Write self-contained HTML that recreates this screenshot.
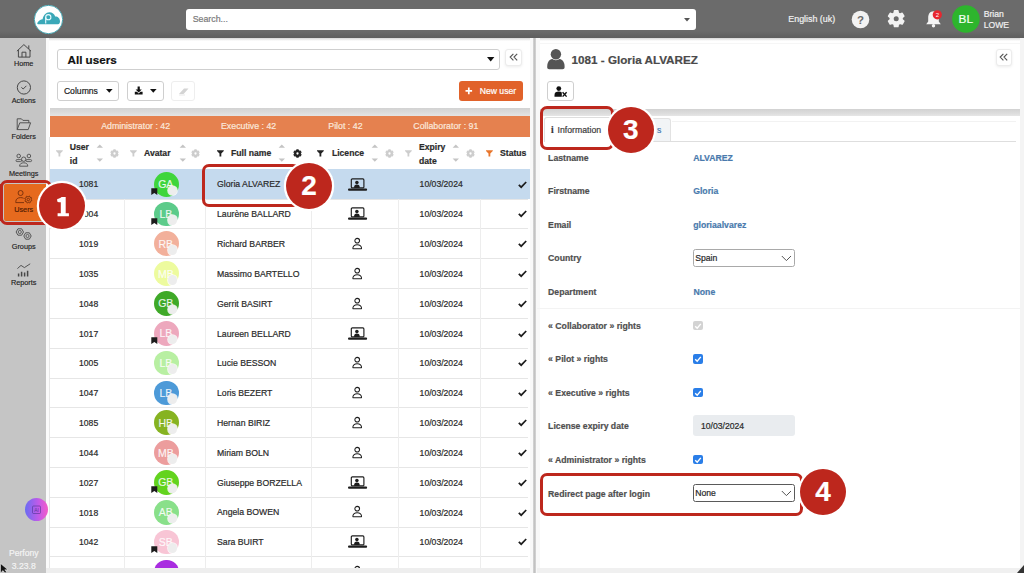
<!DOCTYPE html>
<html><head><meta charset="utf-8"><title>Users</title>
<style>
html,body{margin:0;padding:0;}
body{width:1024px;height:573px;position:relative;overflow:hidden;background:#fff;font-family:"Liberation Sans",sans-serif;}
.t{position:absolute;white-space:nowrap;line-height:1;-webkit-text-stroke:0.2px currentColor;}
.b{position:absolute;display:block;}
svg.b{overflow:visible;}
</style></head><body>
<div class="b" style="left:0.00px;top:0.00px;width:1024.00px;height:37.60px;background:#6b6b6b"></div>
<div class="b" style="left:0.00px;top:31.00px;width:1024.00px;height:6.60px;background:linear-gradient(#6b6b6b,#5f5f5f)"></div>
<div class="b" style="left:46.00px;top:37.60px;width:974.00px;height:3.00px;background:linear-gradient(#d8d8d8,#fff)"></div>
<div class="b" style="left:537.00px;top:43.00px;width:483.00px;height:0.80px;background:#f6f6f6"></div>
<svg class="b" style="left:33.00px;top:3.50px" width="31" height="31" viewBox="0 0 31 31"><circle cx="15.5" cy="15.5" r="14.2" fill="#fff" stroke="#3aa3b0" stroke-width="0.9"/><path d="M5 20.2 C4.2 20.2 4 19.4 4.6 18.6 C5.8 16.6 7.6 15.4 9.6 15.2 C10.4 11.2 13 8.2 16.4 8.2 C19.2 8.2 21.4 10 22.2 12.6 C24.8 12.4 27 14.6 27 17.4 C27 19 26.2 20.2 25 20.2 Z" fill="#3aa8b8"/><circle cx="15.3" cy="13.2" r="2.6" fill="none" stroke="#e9fbff" stroke-width="1.1"/><path d="M12.7 13.2 V19.6" stroke="#e9fbff" stroke-width="1.1"/></svg>
<div class="b" style="left:185.60px;top:8.60px;width:510.70px;height:21.10px;background:#fff;border-radius:3px"></div>
<div class="t" style="left:192.70px;top:14.85px;font-size:8.8px;color:#7a7a7a;font-weight:400;">Search...</div>
<svg class="b" style="left:684.00px;top:18.00px" width="6" height="4" viewBox="0 0 6 4"><path d="M0 0 L6 0 L3 3.5 Z" fill="#555"/></svg>
<div class="t" style="left:788.30px;top:15.07px;font-size:8.9px;color:#f0f0f0;font-weight:400;">English (uk)</div>
<svg class="b" style="left:851.00px;top:10.00px" width="19" height="19" viewBox="0 0 19 19"><circle cx="9.5" cy="9.5" r="8.8" fill="#f2f2f2"/><text x="9.5" y="13.6" text-anchor="middle" font-family="Liberation Sans" font-weight="700" font-size="11.5" fill="#6b6b6b">?</text></svg>
<svg class="b" style="left:886.00px;top:9.00px" width="20" height="20" viewBox="0 0 20 20"><path d="M16.02 10.68 L17.81 12.17 L16.15 15.05 L13.96 14.25 L12.26 15.23 L11.86 17.53 L8.54 17.53 L8.14 15.23 L6.44 14.25 L4.25 15.05 L2.59 12.17 L4.38 10.68 L4.38 8.72 L2.59 7.23 L4.25 4.35 L6.44 5.15 L8.14 4.17 L8.54 1.87 L11.86 1.87 L12.26 4.17 L13.96 5.15 L16.15 4.35 L17.81 7.23 L16.02 8.72 Z" fill="#f2f2f2" stroke="#f2f2f2" stroke-width="1.6" stroke-linejoin="round"/><circle cx="10.2" cy="9.7" r="2.5" fill="#6b6b6b"/></svg>
<svg class="b" style="left:924.00px;top:9.00px" width="22" height="20" viewBox="0 0 22 20"><path d="M9.5 2.2 C6 2.2 4.2 5 4.2 8.6 L4.2 12.4 L2.2 15.2 L16.8 15.2 L14.8 12.4 L14.8 8.6 C14.8 5 13 2.2 9.5 2.2 Z" fill="#f4f4f4"/><circle cx="9.5" cy="16.8" r="1.7" fill="#f4f4f4"/><circle cx="13.3" cy="5.8" r="4.6" fill="#e8262f"/><text x="13.3" y="7.9" text-anchor="middle" font-family="Liberation Sans" font-size="6" fill="#fff">2</text></svg>
<svg class="b" style="left:952.00px;top:5.00px" width="28" height="28" viewBox="0 0 28 28"><circle cx="13.9" cy="14" r="13.8" fill="#2db52d"/></svg>
<div class="t" style="left:950.80px;width:30px;text-align:center;top:13.61px;font-size:11.8px;color:#f4fff4;font-weight:400;">BL</div>
<div class="t" style="left:983.70px;top:9.88px;font-size:8.65px;color:#f0f0f0;font-weight:400;">Brian</div>
<div class="t" style="left:983.70px;top:20.58px;font-size:8.65px;color:#f0f0f0;font-weight:400;">LOWE</div>
<div class="b" style="left:0.00px;top:37.60px;width:46.00px;height:535.40px;background:#c5c5c5"></div>
<div class="b" style="left:46.00px;top:37.60px;width:2.50px;height:535.40px;background:#fbfbfb"></div>
<svg class="b" style="left:16.00px;top:43.00px" width="16" height="16" viewBox="0 0 16 16"><path d="M0.9 8.2 L7.9 1.6 L15 8.2 M2.4 6.9 V14.1 H14 V6.9 M6 14.1 V9.2 H9.9 V14.1 M12.8 2.4 V6" fill="none" stroke="#474747" stroke-width="1"/></svg>
<div class="t" style="left:0.70px;width:46px;text-align:center;top:59.82px;font-size:7.3px;color:#222;font-weight:400;-webkit-text-stroke:0.15px #222">Home</div>
<svg class="b" style="left:16.00px;top:79.50px" width="16" height="16" viewBox="0 0 16 16"><circle cx="7.9" cy="7.5" r="6.6" fill="none" stroke="#474747" stroke-width="1"/><path d="M5.4 7.4 L7.2 9 L10.4 5.8" fill="none" stroke="#474747" stroke-width="1"/></svg>
<div class="t" style="left:0.70px;width:46px;text-align:center;top:97.32px;font-size:7.3px;color:#222;font-weight:400;-webkit-text-stroke:0.15px #222">Actions</div>
<svg class="b" style="left:15.50px;top:116.50px" width="18" height="16" viewBox="0 0 18 16"><path d="M1.2 12.6 V1.8 H5.4 L6.9 3.4 H12.8 V5.8 M1.2 12.6 L3.8 5.8 H14.6 L12.2 12.6 Z" fill="none" stroke="#474747" stroke-width="0.9" stroke-linejoin="round"/></svg>
<div class="t" style="left:0.70px;width:46px;text-align:center;top:133.32px;font-size:7.3px;color:#222;font-weight:400;-webkit-text-stroke:0.15px #222">Folders</div>
<svg class="b" style="left:15.00px;top:153.00px" width="18" height="15" viewBox="0 0 18 15"><circle cx="3.7" cy="3" r="1.8" fill="none" stroke="#474747" stroke-width="0.85"/><circle cx="13.9" cy="3" r="1.8" fill="none" stroke="#474747" stroke-width="0.85"/><circle cx="8.7" cy="6.2" r="2.2" fill="none" stroke="#474747" stroke-width="0.85"/><rect x="1.0" y="6.6" width="5.6" height="2.0" rx="1" fill="none" stroke="#474747" stroke-width="0.8"/><rect x="11.0" y="6.6" width="5.6" height="2.0" rx="1" fill="none" stroke="#474747" stroke-width="0.8"/><path d="M4.6 13.2 C4.6 10.8 6.4 9.8 8.7 9.8 C11 9.8 12.8 10.8 12.8 13.2 Z" fill="none" stroke="#474747" stroke-width="0.85" stroke-linejoin="round"/></svg>
<div class="t" style="left:0.70px;width:46px;text-align:center;top:170.22px;font-size:7.3px;color:#222;font-weight:400;-webkit-text-stroke:0.15px #222">Meetings</div>
<div class="b" style="left:3.60px;top:183.50px;width:42.40px;height:37.10px;background:#e66a1e;border-radius:2px 0 0 2px"></div>
<svg class="b" style="left:14.00px;top:188.00px" width="20" height="16" viewBox="0 0 20 16"><circle cx="6.6" cy="5.0" r="2.5" fill="none" stroke="#6e2a0a" stroke-width="0.85"/><path d="M1.8 14.6 V13.6 C1.8 11 3.8 9.6 6.6 9.6 C7.8 9.6 8.8 9.8 9.6 10.3 M1.8 14.6 H10" fill="none" stroke="#6e2a0a" stroke-width="0.85"/><path d="M17.11 11.50 L17.83 12.20 L17.63 12.88 L16.63 13.06 L16.29 13.49 L16.30 14.49 L15.68 14.83 L14.85 14.25 L14.30 14.31 L13.60 15.03 L12.92 14.83 L12.74 13.83 L12.31 13.49 L11.31 13.50 L10.97 12.88 L11.55 12.05 L11.49 11.50 L10.77 10.80 L10.97 10.12 L11.97 9.94 L12.31 9.51 L12.30 8.51 L12.92 8.17 L13.75 8.75 L14.30 8.69 L15.00 7.97 L15.68 8.17 L15.86 9.17 L16.29 9.51 L17.29 9.50 L17.63 10.12 L17.05 10.95 Z" fill="none" stroke="#6e2a0a" stroke-width="0.85" stroke-linejoin="round"/><circle cx="14.3" cy="11.5" r="1.26" fill="none" stroke="#6e2a0a" stroke-width="0.8"/></svg>
<div class="t" style="left:0.70px;width:46px;text-align:center;top:206.12px;font-size:7.3px;color:#4e1a02;font-weight:400;-webkit-text-stroke:0.15px #4e1a02">Users</div>
<svg class="b" style="left:14.00px;top:226.00px" width="20" height="15" viewBox="0 0 20 15"><polygon points="9.50,6.00 7.65,9.20 3.95,9.20 2.10,6.00 3.95,2.80 7.65,2.80" fill="none" stroke="#474747" stroke-width="0.9" stroke-linejoin="round"/><circle cx="5.8" cy="6.0" r="1.55" fill="none" stroke="#474747" stroke-width="0.8"/><polygon points="17.20,10.00 15.35,13.20 11.65,13.20 9.80,10.00 11.65,6.80 15.35,6.80" fill="none" stroke="#474747" stroke-width="0.9" stroke-linejoin="round"/><circle cx="13.5" cy="10.0" r="1.55" fill="none" stroke="#474747" stroke-width="0.8"/></svg>
<div class="t" style="left:0.70px;width:46px;text-align:center;top:242.72px;font-size:7.3px;color:#222;font-weight:400;-webkit-text-stroke:0.15px #222">Groups</div>
<svg class="b" style="left:16.00px;top:262.50px" width="16" height="15" viewBox="0 0 16 15"><path d="M1.4 5.6 L5 2.4 L8.4 4.6 L14.2 0.8" fill="none" stroke="#474747" stroke-width="0.9"/><path d="M2.6 13.6 V10.6 M5.6 13.6 V8.8 M8.6 13.6 V9.6 M11.6 13.6 V7.8" fill="none" stroke="#474747" stroke-width="1.5"/></svg>
<div class="t" style="left:0.70px;width:46px;text-align:center;top:279.32px;font-size:7.3px;color:#222;font-weight:400;-webkit-text-stroke:0.15px #222">Reports</div>
<div class="b" style="left:24.6px;top:498px;width:23.2px;height:23.2px;border-radius:50%;background:linear-gradient(90deg,#6a6cf2,#c35ae8 60%,#f45cc8)"></div>
<svg class="b" style="left:30.00px;top:504.00px" width="13" height="12" viewBox="0 0 13 12"><rect x="2.5" y="2" width="8" height="7.5" rx="1" fill="none" stroke="#4a2f8a" stroke-width="0.8" opacity="0.7"/><text x="6.5" y="8.2" text-anchor="middle" font-family="Liberation Sans" font-size="5" fill="#4a2f8a" opacity="0.8">AI</text></svg>
<div class="t" style="left:0.80px;width:46px;text-align:center;top:549.38px;font-size:8.65px;color:#f4f4f4;font-weight:400;">Perfony</div>
<div class="t" style="left:0.80px;width:46px;text-align:center;top:562.08px;font-size:8.65px;color:#f4f4f4;font-weight:400;">3.23.8</div>
<svg class="b" style="left:0.00px;top:563.00px" width="9" height="10" viewBox="0 0 9 10"><path d="M0.5 0.5 L0.5 10 L3 7.6 L5 10 L6.6 9 L4.8 6.8 L8 6.8 Z" fill="#111" stroke="#fff" stroke-width="0.5"/></svg>
<div class="b" style="left:57.00px;top:48.50px;width:443.40px;height:21.10px;border:1px solid #cfcfcf;border-radius:3px;box-sizing:border-box;background:#fff"></div>
<div class="t" style="left:67.50px;top:53.84px;font-size:11.65px;color:#111;font-weight:700;">All users</div>
<svg class="b" style="left:486.50px;top:56.50px" width="8" height="5" viewBox="0 0 8 5"><path d="M0 0 H7.4 L3.7 4.4 Z" fill="#111"/></svg>
<div class="b" style="left:505.00px;top:49.20px;width:16.80px;height:17.00px;background:#fff;border-radius:3px;border:1px solid #ececec;box-sizing:border-box;box-shadow:0 1px 3px rgba(0,0,0,0.08)"></div>
<svg class="b" style="left:508.70px;top:53.10px" width="10" height="9" viewBox="0 0 10 9"><path d="M4.4 0.8 L1.2 4.1 L4.4 7.4 M8.2 0.8 L5.0 4.1 L8.2 7.4" fill="none" stroke="#555" stroke-width="1.15"/></svg>
<div class="b" style="left:57.00px;top:81.30px;width:62.30px;height:19.30px;border:1px solid #cfcfcf;border-radius:3px;box-sizing:border-box;background:#fff"></div>
<div class="t" style="left:63.90px;top:86.98px;font-size:8.65px;color:#222;font-weight:400;">Columns</div>
<svg class="b" style="left:105.80px;top:89.00px" width="7" height="4.5" viewBox="0 0 7 4.5"><path d="M0 0 H6.6 L3.3 3.8 Z" fill="#111"/></svg>
<div class="b" style="left:127.00px;top:81.30px;width:37.00px;height:19.30px;border:1px solid #cfcfcf;border-radius:3px;box-sizing:border-box;background:#fff"></div>
<svg class="b" style="left:133.50px;top:86.00px" width="10" height="9" viewBox="0 0 10 9"><path d="M3.6 0.5 H5.8 V3.6 H7.8 L4.7 6.6 L1.6 3.6 H3.6 Z" fill="#111"/><path d="M0.8 5.8 H3 L4.7 7.4 L6.4 5.8 H8.6 V8.6 H0.8 Z" fill="#111"/></svg>
<svg class="b" style="left:150.00px;top:89.00px" width="7" height="4.5" viewBox="0 0 7 4.5"><path d="M0 0 H6.6 L3.3 3.8 Z" fill="#111"/></svg>
<div class="b" style="left:171.00px;top:81.30px;width:24.40px;height:19.30px;border:1px solid #eeeeee;border-radius:3px;box-sizing:border-box;background:#fff"></div>
<svg class="b" style="left:177.50px;top:86.50px" width="12" height="9" viewBox="0 0 12 9"><path d="M1 7 L6 1.5 H10.5 L6.5 6 Z M1 7 H5.5 L6.5 6" fill="#d4d4d4"/><path d="M1 8 H7" stroke="#d8d8d8" stroke-width="0.6"/></svg>
<div class="b" style="left:459.00px;top:81.30px;width:63.80px;height:19.50px;background:#e1622a;border-radius:3px"></div>
<svg class="b" style="left:464.50px;top:87.00px" width="8" height="8" viewBox="0 0 8 8"><path d="M3.8 0.5 V7.3 M0.5 3.9 H7.1" stroke="#fff" stroke-width="1.7"/></svg>
<div class="t" style="left:479.70px;top:86.68px;font-size:8.65px;color:#fff;font-weight:400;">New user</div>
<div class="b" style="left:49.70px;top:108.40px;width:480.30px;height:7.30px;background:linear-gradient(#d2d2d2,#dcdcdc 60%,#e4e4e4)"></div>
<div class="b" style="left:49.70px;top:115.70px;width:480.30px;height:21.70px;background:#e5814f"></div>
<div class="t" style="left:101.20px;top:122.35px;font-size:8.8px;color:#fbe8dc;font-weight:400;">Administrator : 42</div>
<div class="t" style="left:221.00px;top:122.35px;font-size:8.8px;color:#fbe8dc;font-weight:400;">Executive : 42</div>
<div class="t" style="left:328.30px;top:122.35px;font-size:8.8px;color:#fbe8dc;font-weight:400;">Pilot : 42</div>
<div class="t" style="left:413.30px;top:122.35px;font-size:8.8px;color:#fbe8dc;font-weight:400;">Collaborator : 91</div>
<svg class="b" style="left:55.50px;top:149.50px" width="7" height="7" viewBox="0 0 7 7"><path d="M0 0.2 H6.8 V1.0 L4.3 3.5 V6.6 H2.5 V3.5 L0 1.0 Z" fill="#cdcdcd"/></svg>
<div class="t" style="left:69.80px;top:142.68px;font-size:8.65px;color:#2b2b2b;font-weight:700;">User</div>
<div class="t" style="left:69.80px;top:156.58px;font-size:8.65px;color:#2b2b2b;font-weight:700;">id</div>
<svg class="b" style="left:96.00px;top:144.20px" width="8" height="18" viewBox="0 0 8 18"><path d="M0.6 3.8 L3.8 0.4 L7 3.8 Z M0.6 14.4 L3.8 17.8 L7 14.4 Z" fill="#c4c4c4"/></svg>
<svg class="b" style="left:110.00px;top:148.70px" width="9" height="9" viewBox="0 0 9 9"><path d="M7.36 4.98 L8.02 5.64 L7.25 6.98 L6.35 6.73 L5.51 7.22 L5.27 8.12 L3.73 8.12 L3.49 7.22 L2.65 6.73 L1.75 6.98 L0.98 5.64 L1.64 4.98 L1.64 4.02 L0.98 3.36 L1.75 2.02 L2.65 2.27 L3.49 1.78 L3.73 0.88 L5.27 0.88 L5.51 1.78 L6.35 2.27 L7.25 2.02 L8.02 3.36 L7.36 4.02 Z" fill="#cdcdcd" stroke="#cdcdcd" stroke-width="1.1" stroke-linejoin="round"/><circle cx="4.5" cy="4.5" r="1.15" fill="#fff"/></svg>
<svg class="b" style="left:129.50px;top:149.50px" width="7" height="7" viewBox="0 0 7 7"><path d="M0 0.2 H6.8 V1.0 L4.3 3.5 V6.6 H2.5 V3.5 L0 1.0 Z" fill="#cdcdcd"/></svg>
<div class="t" style="left:144.00px;top:149.18px;font-size:8.65px;color:#2b2b2b;font-weight:700;">Avatar</div>
<svg class="b" style="left:178.50px;top:144.20px" width="8" height="18" viewBox="0 0 8 18"><path d="M0.6 3.8 L3.8 0.4 L7 3.8 Z M0.6 14.4 L3.8 17.8 L7 14.4 Z" fill="#c4c4c4"/></svg>
<svg class="b" style="left:191.00px;top:148.70px" width="9" height="9" viewBox="0 0 9 9"><path d="M7.36 4.98 L8.02 5.64 L7.25 6.98 L6.35 6.73 L5.51 7.22 L5.27 8.12 L3.73 8.12 L3.49 7.22 L2.65 6.73 L1.75 6.98 L0.98 5.64 L1.64 4.98 L1.64 4.02 L0.98 3.36 L1.75 2.02 L2.65 2.27 L3.49 1.78 L3.73 0.88 L5.27 0.88 L5.51 1.78 L6.35 2.27 L7.25 2.02 L8.02 3.36 L7.36 4.02 Z" fill="#cdcdcd" stroke="#cdcdcd" stroke-width="1.1" stroke-linejoin="round"/><circle cx="4.5" cy="4.5" r="1.15" fill="#fff"/></svg>
<svg class="b" style="left:216.80px;top:149.50px" width="7" height="7" viewBox="0 0 7 7"><path d="M0 0.2 H6.8 V1.0 L4.3 3.5 V6.6 H2.5 V3.5 L0 1.0 Z" fill="#222"/></svg>
<div class="t" style="left:231.00px;top:149.08px;font-size:8.65px;color:#2b2b2b;font-weight:700;">Full name</div>
<svg class="b" style="left:278.40px;top:144.20px" width="8" height="18" viewBox="0 0 8 18"><path d="M0.6 3.8 L3.8 0.4 L7 3.8 Z M0.6 14.4 L3.8 17.8 L7 14.4 Z" fill="#c4c4c4"/></svg>
<svg class="b" style="left:292.70px;top:148.70px" width="9" height="9" viewBox="0 0 9 9"><path d="M7.36 4.98 L8.02 5.64 L7.25 6.98 L6.35 6.73 L5.51 7.22 L5.27 8.12 L3.73 8.12 L3.49 7.22 L2.65 6.73 L1.75 6.98 L0.98 5.64 L1.64 4.98 L1.64 4.02 L0.98 3.36 L1.75 2.02 L2.65 2.27 L3.49 1.78 L3.73 0.88 L5.27 0.88 L5.51 1.78 L6.35 2.27 L7.25 2.02 L8.02 3.36 L7.36 4.02 Z" fill="#222" stroke="#222" stroke-width="1.1" stroke-linejoin="round"/><circle cx="4.5" cy="4.5" r="1.15" fill="#fff"/></svg>
<svg class="b" style="left:317.00px;top:149.50px" width="7" height="7" viewBox="0 0 7 7"><path d="M0 0.2 H6.8 V1.0 L4.3 3.5 V6.6 H2.5 V3.5 L0 1.0 Z" fill="#222"/></svg>
<div class="t" style="left:331.90px;top:149.08px;font-size:8.65px;color:#2b2b2b;font-weight:700;">Licence</div>
<svg class="b" style="left:371.00px;top:144.20px" width="8" height="18" viewBox="0 0 8 18"><path d="M0.6 3.8 L3.8 0.4 L7 3.8 Z M0.6 14.4 L3.8 17.8 L7 14.4 Z" fill="#c4c4c4"/></svg>
<svg class="b" style="left:385.00px;top:148.70px" width="9" height="9" viewBox="0 0 9 9"><path d="M7.36 4.98 L8.02 5.64 L7.25 6.98 L6.35 6.73 L5.51 7.22 L5.27 8.12 L3.73 8.12 L3.49 7.22 L2.65 6.73 L1.75 6.98 L0.98 5.64 L1.64 4.98 L1.64 4.02 L0.98 3.36 L1.75 2.02 L2.65 2.27 L3.49 1.78 L3.73 0.88 L5.27 0.88 L5.51 1.78 L6.35 2.27 L7.25 2.02 L8.02 3.36 L7.36 4.02 Z" fill="#cdcdcd" stroke="#cdcdcd" stroke-width="1.1" stroke-linejoin="round"/><circle cx="4.5" cy="4.5" r="1.15" fill="#fff"/></svg>
<svg class="b" style="left:404.50px;top:149.50px" width="7" height="7" viewBox="0 0 7 7"><path d="M0 0.2 H6.8 V1.0 L4.3 3.5 V6.6 H2.5 V3.5 L0 1.0 Z" fill="#cdcdcd"/></svg>
<div class="t" style="left:419.00px;top:142.68px;font-size:8.65px;color:#2b2b2b;font-weight:700;">Expiry</div>
<div class="t" style="left:419.00px;top:156.58px;font-size:8.65px;color:#2b2b2b;font-weight:700;">date</div>
<svg class="b" style="left:452.00px;top:144.20px" width="8" height="18" viewBox="0 0 8 18"><path d="M0.6 3.8 L3.8 0.4 L7 3.8 Z M0.6 14.4 L3.8 17.8 L7 14.4 Z" fill="#c4c4c4"/></svg>
<svg class="b" style="left:466.30px;top:148.70px" width="9" height="9" viewBox="0 0 9 9"><path d="M7.36 4.98 L8.02 5.64 L7.25 6.98 L6.35 6.73 L5.51 7.22 L5.27 8.12 L3.73 8.12 L3.49 7.22 L2.65 6.73 L1.75 6.98 L0.98 5.64 L1.64 4.98 L1.64 4.02 L0.98 3.36 L1.75 2.02 L2.65 2.27 L3.49 1.78 L3.73 0.88 L5.27 0.88 L5.51 1.78 L6.35 2.27 L7.25 2.02 L8.02 3.36 L7.36 4.02 Z" fill="#cdcdcd" stroke="#cdcdcd" stroke-width="1.1" stroke-linejoin="round"/><circle cx="4.5" cy="4.5" r="1.15" fill="#fff"/></svg>
<svg class="b" style="left:485.80px;top:149.50px" width="7" height="7" viewBox="0 0 7 7"><path d="M0 0.2 H6.8 V1.0 L4.3 3.5 V6.6 H2.5 V3.5 L0 1.0 Z" fill="#e8762c"/></svg>
<div class="t" style="left:500.00px;top:149.08px;font-size:8.65px;color:#2b2b2b;font-weight:700;">Status</div>
<div class="b" style="left:50.00px;top:169.20px;width:480.00px;height:398.60px;background:#fff"></div>
<div class="b" style="left:50.00px;top:169.20px;width:480.00px;height:29.83px;background:#c5daee"></div>
<div class="b" style="left:50.00px;top:198.53px;width:478.00px;height:1.00px;background:#e6e6e6"></div>
<div class="b" style="left:50.00px;top:228.36px;width:478.00px;height:1.00px;background:#e6e6e6"></div>
<div class="b" style="left:50.00px;top:258.19px;width:478.00px;height:1.00px;background:#e6e6e6"></div>
<div class="b" style="left:50.00px;top:288.02px;width:478.00px;height:1.00px;background:#e6e6e6"></div>
<div class="b" style="left:50.00px;top:317.85px;width:478.00px;height:1.00px;background:#e6e6e6"></div>
<div class="b" style="left:50.00px;top:347.68px;width:478.00px;height:1.00px;background:#e6e6e6"></div>
<div class="b" style="left:50.00px;top:377.51px;width:478.00px;height:1.00px;background:#e6e6e6"></div>
<div class="b" style="left:50.00px;top:407.34px;width:478.00px;height:1.00px;background:#e6e6e6"></div>
<div class="b" style="left:50.00px;top:437.17px;width:478.00px;height:1.00px;background:#e6e6e6"></div>
<div class="b" style="left:50.00px;top:467.00px;width:478.00px;height:1.00px;background:#e6e6e6"></div>
<div class="b" style="left:50.00px;top:496.83px;width:478.00px;height:1.00px;background:#e6e6e6"></div>
<div class="b" style="left:50.00px;top:526.66px;width:478.00px;height:1.00px;background:#e6e6e6"></div>
<div class="b" style="left:50.00px;top:556.49px;width:478.00px;height:1.00px;background:#e6e6e6"></div>
<div class="b" style="left:124.30px;top:199.03px;width:1.00px;height:368.77px;background:#ededed"></div>
<div class="b" style="left:204.90px;top:199.03px;width:1.00px;height:368.77px;background:#ededed"></div>
<div class="b" style="left:311.00px;top:199.03px;width:1.00px;height:368.77px;background:#ededed"></div>
<div class="b" style="left:398.10px;top:199.03px;width:1.00px;height:368.77px;background:#ededed"></div>
<div class="b" style="left:479.90px;top:199.03px;width:1.00px;height:368.77px;background:#ededed"></div>
<div class="t" style="left:79.00px;top:180.49px;font-size:8.65px;color:#2a2a2a;font-weight:400;">1081</div>
<div class="b" style="left:153.90px;top:171.71px;width:24.8px;height:24.8px;border-radius:50%;background:#3fd53b"></div>
<div class="t" style="left:150.80px;width:30px;text-align:center;top:179.03px;font-size:10.5px;color:rgba(255,255,255,0.85);font-weight:400;">GA</div>
<div class="b" style="left:167.60px;top:185.51px;width:9.6px;height:9.6px;border-radius:50%;background:#ededed;box-shadow:0 0 0 0.8px rgba(255,255,255,0.8)"></div>
<svg class="b" style="left:151.40px;top:187.91px" width="7" height="7.5" viewBox="0 0 7 7.5"><path d="M0.3 0.2 H6.3 V7 L3.3 5 L0.3 7 Z" fill="#1c1c1c"/></svg>
<div class="t" style="left:217.00px;top:180.35px;font-size:8.7px;color:#2a2a2a;font-weight:400;">Gloria ALVAREZ</div>
<div class="t" style="left:419.60px;top:180.39px;font-size:8.65px;color:#2a2a2a;font-weight:400;">10/03/2024</div>
<svg class="b" style="left:518.00px;top:180.51px" width="9" height="7.5" viewBox="0 0 9 7.5"><path d="M0.8 3.8 L3.2 6.2 L8.2 1" fill="none" stroke="#1c1c1c" stroke-width="1.7"/></svg>
<svg class="b" style="left:347.90px;top:177.51px" width="20" height="13" viewBox="0 0 20 13"><rect x="3.3" y="0.9" width="12.6" height="9.0" rx="1" fill="none" stroke="#1e1e1e" stroke-width="1.15"/><circle cx="8.9" cy="4.5" r="1.75" fill="#1e1e1e"/><path d="M6.2 9.9 V8.6 C6.2 7.2 7.4 6.5 8.9 6.5 C10.4 6.5 11.6 7.2 11.6 8.6 V9.9 Z" fill="#1e1e1e"/><rect x="0" y="10.6" width="19.1" height="2.1" rx="1" fill="#1e1e1e"/></svg>
<div class="t" style="left:79.00px;top:210.32px;font-size:8.65px;color:#2a2a2a;font-weight:400;">1004</div>
<div class="b" style="left:153.90px;top:201.54px;width:24.8px;height:24.8px;border-radius:50%;background:#5ccb8a"></div>
<div class="t" style="left:150.80px;width:30px;text-align:center;top:208.86px;font-size:10.5px;color:rgba(255,255,255,0.85);font-weight:400;">LB</div>
<div class="b" style="left:167.60px;top:215.34px;width:9.6px;height:9.6px;border-radius:50%;background:#ededed;box-shadow:0 0 0 0.8px rgba(255,255,255,0.8)"></div>
<svg class="b" style="left:151.40px;top:217.75px" width="7" height="7.5" viewBox="0 0 7 7.5"><path d="M0.3 0.2 H6.3 V7 L3.3 5 L0.3 7 Z" fill="#1c1c1c"/></svg>
<div class="t" style="left:217.00px;top:210.18px;font-size:8.7px;color:#2a2a2a;font-weight:400;">Laurène BALLARD</div>
<div class="t" style="left:419.60px;top:210.22px;font-size:8.65px;color:#2a2a2a;font-weight:400;">10/03/2024</div>
<svg class="b" style="left:518.00px;top:210.34px" width="9" height="7.5" viewBox="0 0 9 7.5"><path d="M0.8 3.8 L3.2 6.2 L8.2 1" fill="none" stroke="#1c1c1c" stroke-width="1.7"/></svg>
<svg class="b" style="left:347.90px;top:207.34px" width="20" height="13" viewBox="0 0 20 13"><rect x="3.3" y="0.9" width="12.6" height="9.0" rx="1" fill="none" stroke="#1e1e1e" stroke-width="1.15"/><circle cx="8.9" cy="4.5" r="1.75" fill="#1e1e1e"/><path d="M6.2 9.9 V8.6 C6.2 7.2 7.4 6.5 8.9 6.5 C10.4 6.5 11.6 7.2 11.6 8.6 V9.9 Z" fill="#1e1e1e"/><rect x="0" y="10.6" width="19.1" height="2.1" rx="1" fill="#1e1e1e"/></svg>
<div class="t" style="left:79.00px;top:240.15px;font-size:8.65px;color:#2a2a2a;font-weight:400;">1019</div>
<div class="b" style="left:153.90px;top:231.37px;width:24.8px;height:24.8px;border-radius:50%;background:#f2b09b"></div>
<div class="t" style="left:150.80px;width:30px;text-align:center;top:238.69px;font-size:10.5px;color:rgba(255,255,255,0.85);font-weight:400;">RB</div>
<div class="b" style="left:167.60px;top:245.17px;width:9.6px;height:9.6px;border-radius:50%;background:#ededed;box-shadow:0 0 0 0.8px rgba(255,255,255,0.8)"></div>
<div class="t" style="left:217.00px;top:240.01px;font-size:8.7px;color:#2a2a2a;font-weight:400;">Richard BARBER</div>
<div class="t" style="left:419.60px;top:240.05px;font-size:8.65px;color:#2a2a2a;font-weight:400;">10/03/2024</div>
<svg class="b" style="left:518.00px;top:240.17px" width="9" height="7.5" viewBox="0 0 9 7.5"><path d="M0.8 3.8 L3.2 6.2 L8.2 1" fill="none" stroke="#1c1c1c" stroke-width="1.7"/></svg>
<svg class="b" style="left:351.70px;top:237.87px" width="11" height="12.5" viewBox="0 0 11 12.5"><circle cx="5.2" cy="2.7" r="2.35" fill="none" stroke="#1e1e1e" stroke-width="1.05"/><path d="M0.9 10.8 C0.6 8.2 2.4 6.8 5.2 6.8 C8 6.8 9.8 8.2 9.5 10.8 Z" fill="none" stroke="#1e1e1e" stroke-width="1.05" stroke-linejoin="round"/></svg>
<div class="t" style="left:79.00px;top:269.98px;font-size:8.65px;color:#2a2a2a;font-weight:400;">1035</div>
<div class="b" style="left:153.90px;top:261.21px;width:24.8px;height:24.8px;border-radius:50%;background:#edfb9e"></div>
<div class="t" style="left:150.80px;width:30px;text-align:center;top:268.52px;font-size:10.5px;color:rgba(255,255,255,0.85);font-weight:400;">MB</div>
<div class="b" style="left:167.60px;top:275.00px;width:9.6px;height:9.6px;border-radius:50%;background:#ededed;box-shadow:0 0 0 0.8px rgba(255,255,255,0.8)"></div>
<div class="t" style="left:217.00px;top:269.84px;font-size:8.7px;color:#2a2a2a;font-weight:400;">Massimo BARTELLO</div>
<div class="t" style="left:419.60px;top:269.88px;font-size:8.65px;color:#2a2a2a;font-weight:400;">10/03/2024</div>
<svg class="b" style="left:518.00px;top:270.00px" width="9" height="7.5" viewBox="0 0 9 7.5"><path d="M0.8 3.8 L3.2 6.2 L8.2 1" fill="none" stroke="#1c1c1c" stroke-width="1.7"/></svg>
<svg class="b" style="left:351.70px;top:267.71px" width="11" height="12.5" viewBox="0 0 11 12.5"><circle cx="5.2" cy="2.7" r="2.35" fill="none" stroke="#1e1e1e" stroke-width="1.05"/><path d="M0.9 10.8 C0.6 8.2 2.4 6.8 5.2 6.8 C8 6.8 9.8 8.2 9.5 10.8 Z" fill="none" stroke="#1e1e1e" stroke-width="1.05" stroke-linejoin="round"/></svg>
<div class="t" style="left:79.00px;top:299.81px;font-size:8.65px;color:#2a2a2a;font-weight:400;">1048</div>
<div class="b" style="left:153.90px;top:291.03px;width:24.8px;height:24.8px;border-radius:50%;background:#3fa928"></div>
<div class="t" style="left:150.80px;width:30px;text-align:center;top:298.35px;font-size:10.5px;color:rgba(255,255,255,0.85);font-weight:400;">GB</div>
<div class="b" style="left:167.60px;top:304.83px;width:9.6px;height:9.6px;border-radius:50%;background:#ededed;box-shadow:0 0 0 0.8px rgba(255,255,255,0.8)"></div>
<div class="t" style="left:217.00px;top:299.67px;font-size:8.7px;color:#2a2a2a;font-weight:400;">Gerrit BASIRT</div>
<div class="t" style="left:419.60px;top:299.71px;font-size:8.65px;color:#2a2a2a;font-weight:400;">10/03/2024</div>
<svg class="b" style="left:518.00px;top:299.83px" width="9" height="7.5" viewBox="0 0 9 7.5"><path d="M0.8 3.8 L3.2 6.2 L8.2 1" fill="none" stroke="#1c1c1c" stroke-width="1.7"/></svg>
<svg class="b" style="left:351.70px;top:297.53px" width="11" height="12.5" viewBox="0 0 11 12.5"><circle cx="5.2" cy="2.7" r="2.35" fill="none" stroke="#1e1e1e" stroke-width="1.05"/><path d="M0.9 10.8 C0.6 8.2 2.4 6.8 5.2 6.8 C8 6.8 9.8 8.2 9.5 10.8 Z" fill="none" stroke="#1e1e1e" stroke-width="1.05" stroke-linejoin="round"/></svg>
<div class="t" style="left:79.00px;top:329.64px;font-size:8.65px;color:#2a2a2a;font-weight:400;">1017</div>
<div class="b" style="left:153.90px;top:320.87px;width:24.8px;height:24.8px;border-radius:50%;background:#eda8bd"></div>
<div class="t" style="left:150.80px;width:30px;text-align:center;top:328.18px;font-size:10.5px;color:rgba(255,255,255,0.85);font-weight:400;">LB</div>
<div class="b" style="left:167.60px;top:334.66px;width:9.6px;height:9.6px;border-radius:50%;background:#ededed;box-shadow:0 0 0 0.8px rgba(255,255,255,0.8)"></div>
<svg class="b" style="left:151.40px;top:337.06px" width="7" height="7.5" viewBox="0 0 7 7.5"><path d="M0.3 0.2 H6.3 V7 L3.3 5 L0.3 7 Z" fill="#1c1c1c"/></svg>
<div class="t" style="left:217.00px;top:329.50px;font-size:8.7px;color:#2a2a2a;font-weight:400;">Laureen BELLARD</div>
<div class="t" style="left:419.60px;top:329.54px;font-size:8.65px;color:#2a2a2a;font-weight:400;">10/03/2024</div>
<svg class="b" style="left:518.00px;top:329.66px" width="9" height="7.5" viewBox="0 0 9 7.5"><path d="M0.8 3.8 L3.2 6.2 L8.2 1" fill="none" stroke="#1c1c1c" stroke-width="1.7"/></svg>
<svg class="b" style="left:347.90px;top:326.66px" width="20" height="13" viewBox="0 0 20 13"><rect x="3.3" y="0.9" width="12.6" height="9.0" rx="1" fill="none" stroke="#1e1e1e" stroke-width="1.15"/><circle cx="8.9" cy="4.5" r="1.75" fill="#1e1e1e"/><path d="M6.2 9.9 V8.6 C6.2 7.2 7.4 6.5 8.9 6.5 C10.4 6.5 11.6 7.2 11.6 8.6 V9.9 Z" fill="#1e1e1e"/><rect x="0" y="10.6" width="19.1" height="2.1" rx="1" fill="#1e1e1e"/></svg>
<div class="t" style="left:79.00px;top:359.47px;font-size:8.65px;color:#2a2a2a;font-weight:400;">1005</div>
<div class="b" style="left:153.90px;top:350.69px;width:24.8px;height:24.8px;border-radius:50%;background:#b8efa2"></div>
<div class="t" style="left:150.80px;width:30px;text-align:center;top:358.01px;font-size:10.5px;color:rgba(255,255,255,0.85);font-weight:400;">LB</div>
<div class="b" style="left:167.60px;top:364.49px;width:9.6px;height:9.6px;border-radius:50%;background:#ededed;box-shadow:0 0 0 0.8px rgba(255,255,255,0.8)"></div>
<div class="t" style="left:217.00px;top:359.33px;font-size:8.7px;color:#2a2a2a;font-weight:400;">Lucie BESSON</div>
<div class="t" style="left:419.60px;top:359.37px;font-size:8.65px;color:#2a2a2a;font-weight:400;">10/03/2024</div>
<svg class="b" style="left:518.00px;top:359.49px" width="9" height="7.5" viewBox="0 0 9 7.5"><path d="M0.8 3.8 L3.2 6.2 L8.2 1" fill="none" stroke="#1c1c1c" stroke-width="1.7"/></svg>
<svg class="b" style="left:351.70px;top:357.19px" width="11" height="12.5" viewBox="0 0 11 12.5"><circle cx="5.2" cy="2.7" r="2.35" fill="none" stroke="#1e1e1e" stroke-width="1.05"/><path d="M0.9 10.8 C0.6 8.2 2.4 6.8 5.2 6.8 C8 6.8 9.8 8.2 9.5 10.8 Z" fill="none" stroke="#1e1e1e" stroke-width="1.05" stroke-linejoin="round"/></svg>
<div class="t" style="left:79.00px;top:389.30px;font-size:8.65px;color:#2a2a2a;font-weight:400;">1047</div>
<div class="b" style="left:153.90px;top:380.52px;width:24.8px;height:24.8px;border-radius:50%;background:#4d9ad8"></div>
<div class="t" style="left:150.80px;width:30px;text-align:center;top:387.84px;font-size:10.5px;color:rgba(255,255,255,0.85);font-weight:400;">LB</div>
<div class="b" style="left:167.60px;top:394.32px;width:9.6px;height:9.6px;border-radius:50%;background:#ededed;box-shadow:0 0 0 0.8px rgba(255,255,255,0.8)"></div>
<div class="t" style="left:217.00px;top:389.16px;font-size:8.7px;color:#2a2a2a;font-weight:400;">Loris BEZERT</div>
<div class="t" style="left:419.60px;top:389.20px;font-size:8.65px;color:#2a2a2a;font-weight:400;">10/03/2024</div>
<svg class="b" style="left:518.00px;top:389.32px" width="9" height="7.5" viewBox="0 0 9 7.5"><path d="M0.8 3.8 L3.2 6.2 L8.2 1" fill="none" stroke="#1c1c1c" stroke-width="1.7"/></svg>
<svg class="b" style="left:351.70px;top:387.02px" width="11" height="12.5" viewBox="0 0 11 12.5"><circle cx="5.2" cy="2.7" r="2.35" fill="none" stroke="#1e1e1e" stroke-width="1.05"/><path d="M0.9 10.8 C0.6 8.2 2.4 6.8 5.2 6.8 C8 6.8 9.8 8.2 9.5 10.8 Z" fill="none" stroke="#1e1e1e" stroke-width="1.05" stroke-linejoin="round"/></svg>
<div class="t" style="left:79.00px;top:419.13px;font-size:8.65px;color:#2a2a2a;font-weight:400;">1085</div>
<div class="b" style="left:153.90px;top:410.36px;width:24.8px;height:24.8px;border-radius:50%;background:#86b321"></div>
<div class="t" style="left:150.80px;width:30px;text-align:center;top:417.67px;font-size:10.5px;color:rgba(255,255,255,0.85);font-weight:400;">HB</div>
<div class="b" style="left:167.60px;top:424.15px;width:9.6px;height:9.6px;border-radius:50%;background:#ededed;box-shadow:0 0 0 0.8px rgba(255,255,255,0.8)"></div>
<div class="t" style="left:217.00px;top:418.99px;font-size:8.7px;color:#2a2a2a;font-weight:400;">Hernan BIRIZ</div>
<div class="t" style="left:419.60px;top:419.03px;font-size:8.65px;color:#2a2a2a;font-weight:400;">10/03/2024</div>
<svg class="b" style="left:518.00px;top:419.15px" width="9" height="7.5" viewBox="0 0 9 7.5"><path d="M0.8 3.8 L3.2 6.2 L8.2 1" fill="none" stroke="#1c1c1c" stroke-width="1.7"/></svg>
<svg class="b" style="left:351.70px;top:416.86px" width="11" height="12.5" viewBox="0 0 11 12.5"><circle cx="5.2" cy="2.7" r="2.35" fill="none" stroke="#1e1e1e" stroke-width="1.05"/><path d="M0.9 10.8 C0.6 8.2 2.4 6.8 5.2 6.8 C8 6.8 9.8 8.2 9.5 10.8 Z" fill="none" stroke="#1e1e1e" stroke-width="1.05" stroke-linejoin="round"/></svg>
<div class="t" style="left:79.00px;top:448.96px;font-size:8.65px;color:#2a2a2a;font-weight:400;">1044</div>
<div class="b" style="left:153.90px;top:440.19px;width:24.8px;height:24.8px;border-radius:50%;background:#ec9d9d"></div>
<div class="t" style="left:150.80px;width:30px;text-align:center;top:447.50px;font-size:10.5px;color:rgba(255,255,255,0.85);font-weight:400;">MB</div>
<div class="b" style="left:167.60px;top:453.98px;width:9.6px;height:9.6px;border-radius:50%;background:#ededed;box-shadow:0 0 0 0.8px rgba(255,255,255,0.8)"></div>
<div class="t" style="left:217.00px;top:448.82px;font-size:8.7px;color:#2a2a2a;font-weight:400;">Miriam BOLN</div>
<div class="t" style="left:419.60px;top:448.86px;font-size:8.65px;color:#2a2a2a;font-weight:400;">10/03/2024</div>
<svg class="b" style="left:518.00px;top:448.98px" width="9" height="7.5" viewBox="0 0 9 7.5"><path d="M0.8 3.8 L3.2 6.2 L8.2 1" fill="none" stroke="#1c1c1c" stroke-width="1.7"/></svg>
<svg class="b" style="left:351.70px;top:446.69px" width="11" height="12.5" viewBox="0 0 11 12.5"><circle cx="5.2" cy="2.7" r="2.35" fill="none" stroke="#1e1e1e" stroke-width="1.05"/><path d="M0.9 10.8 C0.6 8.2 2.4 6.8 5.2 6.8 C8 6.8 9.8 8.2 9.5 10.8 Z" fill="none" stroke="#1e1e1e" stroke-width="1.05" stroke-linejoin="round"/></svg>
<div class="t" style="left:79.00px;top:478.79px;font-size:8.65px;color:#2a2a2a;font-weight:400;">1027</div>
<div class="b" style="left:153.90px;top:470.01px;width:24.8px;height:24.8px;border-radius:50%;background:#63d31e"></div>
<div class="t" style="left:150.80px;width:30px;text-align:center;top:477.33px;font-size:10.5px;color:rgba(255,255,255,0.85);font-weight:400;">GB</div>
<div class="b" style="left:167.60px;top:483.81px;width:9.6px;height:9.6px;border-radius:50%;background:#ededed;box-shadow:0 0 0 0.8px rgba(255,255,255,0.8)"></div>
<svg class="b" style="left:151.40px;top:486.21px" width="7" height="7.5" viewBox="0 0 7 7.5"><path d="M0.3 0.2 H6.3 V7 L3.3 5 L0.3 7 Z" fill="#1c1c1c"/></svg>
<div class="t" style="left:217.00px;top:478.65px;font-size:8.7px;color:#2a2a2a;font-weight:400;">Giuseppe BORZELLA</div>
<div class="t" style="left:419.60px;top:478.69px;font-size:8.65px;color:#2a2a2a;font-weight:400;">10/03/2024</div>
<svg class="b" style="left:518.00px;top:478.81px" width="9" height="7.5" viewBox="0 0 9 7.5"><path d="M0.8 3.8 L3.2 6.2 L8.2 1" fill="none" stroke="#1c1c1c" stroke-width="1.7"/></svg>
<svg class="b" style="left:347.90px;top:475.81px" width="20" height="13" viewBox="0 0 20 13"><rect x="3.3" y="0.9" width="12.6" height="9.0" rx="1" fill="none" stroke="#1e1e1e" stroke-width="1.15"/><circle cx="8.9" cy="4.5" r="1.75" fill="#1e1e1e"/><path d="M6.2 9.9 V8.6 C6.2 7.2 7.4 6.5 8.9 6.5 C10.4 6.5 11.6 7.2 11.6 8.6 V9.9 Z" fill="#1e1e1e"/><rect x="0" y="10.6" width="19.1" height="2.1" rx="1" fill="#1e1e1e"/></svg>
<div class="t" style="left:79.00px;top:508.62px;font-size:8.65px;color:#2a2a2a;font-weight:400;">1018</div>
<div class="b" style="left:153.90px;top:499.84px;width:24.8px;height:24.8px;border-radius:50%;background:#89e08a"></div>
<div class="t" style="left:150.80px;width:30px;text-align:center;top:507.16px;font-size:10.5px;color:rgba(255,255,255,0.85);font-weight:400;">AB</div>
<div class="b" style="left:167.60px;top:513.64px;width:9.6px;height:9.6px;border-radius:50%;background:#ededed;box-shadow:0 0 0 0.8px rgba(255,255,255,0.8)"></div>
<div class="t" style="left:217.00px;top:508.48px;font-size:8.7px;color:#2a2a2a;font-weight:400;">Angela BOWEN</div>
<div class="t" style="left:419.60px;top:508.52px;font-size:8.65px;color:#2a2a2a;font-weight:400;">10/03/2024</div>
<svg class="b" style="left:518.00px;top:508.64px" width="9" height="7.5" viewBox="0 0 9 7.5"><path d="M0.8 3.8 L3.2 6.2 L8.2 1" fill="none" stroke="#1c1c1c" stroke-width="1.7"/></svg>
<svg class="b" style="left:351.70px;top:506.34px" width="11" height="12.5" viewBox="0 0 11 12.5"><circle cx="5.2" cy="2.7" r="2.35" fill="none" stroke="#1e1e1e" stroke-width="1.05"/><path d="M0.9 10.8 C0.6 8.2 2.4 6.8 5.2 6.8 C8 6.8 9.8 8.2 9.5 10.8 Z" fill="none" stroke="#1e1e1e" stroke-width="1.05" stroke-linejoin="round"/></svg>
<div class="t" style="left:79.00px;top:538.45px;font-size:8.65px;color:#2a2a2a;font-weight:400;">1042</div>
<div class="b" style="left:153.90px;top:529.68px;width:24.8px;height:24.8px;border-radius:50%;background:#f8c5d5"></div>
<div class="t" style="left:150.80px;width:30px;text-align:center;top:536.99px;font-size:10.5px;color:rgba(255,255,255,0.85);font-weight:400;">SB</div>
<div class="b" style="left:167.60px;top:543.48px;width:9.6px;height:9.6px;border-radius:50%;background:#ededed;box-shadow:0 0 0 0.8px rgba(255,255,255,0.8)"></div>
<svg class="b" style="left:151.40px;top:545.88px" width="7" height="7.5" viewBox="0 0 7 7.5"><path d="M0.3 0.2 H6.3 V7 L3.3 5 L0.3 7 Z" fill="#1c1c1c"/></svg>
<div class="t" style="left:217.00px;top:538.31px;font-size:8.7px;color:#2a2a2a;font-weight:400;">Sara BUIRT</div>
<div class="t" style="left:419.60px;top:538.35px;font-size:8.65px;color:#2a2a2a;font-weight:400;">10/03/2024</div>
<svg class="b" style="left:518.00px;top:538.48px" width="9" height="7.5" viewBox="0 0 9 7.5"><path d="M0.8 3.8 L3.2 6.2 L8.2 1" fill="none" stroke="#1c1c1c" stroke-width="1.7"/></svg>
<svg class="b" style="left:347.90px;top:535.48px" width="20" height="13" viewBox="0 0 20 13"><rect x="3.3" y="0.9" width="12.6" height="9.0" rx="1" fill="none" stroke="#1e1e1e" stroke-width="1.15"/><circle cx="8.9" cy="4.5" r="1.75" fill="#1e1e1e"/><path d="M6.2 9.9 V8.6 C6.2 7.2 7.4 6.5 8.9 6.5 C10.4 6.5 11.6 7.2 11.6 8.6 V9.9 Z" fill="#1e1e1e"/><rect x="0" y="10.6" width="19.1" height="2.1" rx="1" fill="#1e1e1e"/></svg>
<div class="b" style="left:153.90px;top:559.50px;width:24.8px;height:24.8px;border-radius:50%;background:#a92de0"></div>
<svg class="b" style="left:351.70px;top:566.00px" width="11" height="12.5" viewBox="0 0 11 12.5"><circle cx="5.2" cy="2.7" r="2.35" fill="none" stroke="#1e1e1e" stroke-width="1.05"/><path d="M0.9 10.8 C0.6 8.2 2.4 6.8 5.2 6.8 C8 6.8 9.8 8.2 9.5 10.8 Z" fill="none" stroke="#1e1e1e" stroke-width="1.05" stroke-linejoin="round"/></svg>
<div class="b" style="left:49.00px;top:137.40px;width:1.00px;height:430.40px;background:#e6e6e6"></div>
<div class="b" style="left:46.00px;top:567.80px;width:488.00px;height:5.20px;background:#eeeeee"></div>
<div class="b" style="left:530.00px;top:37.60px;width:10.00px;height:535.40px;background:#f8f8f8"></div>
<div class="b" style="left:533.20px;top:37.60px;width:3.20px;height:535.40px;background:linear-gradient(90deg,#d6d6d6,#c2c2c2 50%,#d6d6d6)"></div>
<div class="b" style="left:1020.00px;top:37.60px;width:4.00px;height:535.40px;background:#f4f4f4"></div>
<div class="b" style="left:536.50px;top:568.20px;width:487.50px;height:4.80px;background:#f0f0f0"></div>
<svg class="b" style="left:1017.00px;top:565.00px" width="7" height="8" viewBox="0 0 7 8"><path d="M7 0 V8 H0 Z" fill="#333"/></svg>
<svg class="b" style="left:546.50px;top:49.40px" width="18" height="20.5" viewBox="0 0 18 20.5"><path d="M0.2 17.4 C0.2 12.8 2.8 9.8 6.6 9.8 H11.2 C15 9.8 17.6 12.8 17.6 17.4 V18.2 C17.6 19.4 16.8 20.2 15.6 20.2 H2.2 C1 20.2 0.2 19.4 0.2 18.2 Z" fill="#555"/><circle cx="8.9" cy="5.2" r="6.0" fill="#fff"/><circle cx="8.9" cy="5.2" r="5.2" fill="#555"/></svg>
<div class="t" style="left:571.50px;top:53.70px;font-size:11.7px;color:#4a4a4a;font-weight:700;">1081 - Gloria ALVAREZ</div>
<div class="b" style="left:547.40px;top:81.30px;width:27.10px;height:19.30px;border:1px solid #cfcfcf;border-radius:3px;box-sizing:border-box;background:#fff"></div>
<svg class="b" style="left:553.50px;top:85.50px" width="16" height="12" viewBox="0 0 16 12"><circle cx="4.8" cy="2.6" r="2.4" fill="#111"/><path d="M0.5 10.8 V9 C0.5 6.6 2.2 5.6 4.8 5.6 C6.2 5.6 7.2 5.9 7.8 6.4 V10.8 Z" fill="#111"/><path d="M8.6 6.2 L12.6 10.6 M12.6 6.2 L8.6 10.6" stroke="#111" stroke-width="1.4"/></svg>
<div class="b" style="left:995.70px;top:49.00px;width:16.30px;height:17.20px;background:#fff;border-radius:3px;border:1px solid #ececec;box-sizing:border-box;box-shadow:0 1px 3px rgba(0,0,0,0.08)"></div>
<svg class="b" style="left:999.40px;top:53.10px" width="10" height="9" viewBox="0 0 10 9"><path d="M4.4 0.8 L1.2 4.1 L4.4 7.4 M8.2 0.8 L5.0 4.1 L8.2 7.4" fill="none" stroke="#555" stroke-width="1.15"/></svg>
<div class="b" style="left:540.00px;top:108.60px;width:480.00px;height:7.40px;background:linear-gradient(#d2d2d2,#dcdcdc 60%,#e6e6e6)"></div>
<div class="b" style="left:672.00px;top:120.60px;width:344.00px;height:0.80px;background:#f2f2f2"></div>
<div class="b" style="left:600.00px;top:118.30px;width:71.00px;height:22.70px;background:#f2f4f6;border:1px solid #e2e2e2;border-bottom:none;border-radius:3px 3px 0 0;box-sizing:border-box"></div>
<div class="t" style="left:657.00px;top:125.94px;font-size:8.7px;color:#4a7ab0;font-weight:400;">s</div>
<div class="b" style="left:543.50px;top:116.50px;width:68.50px;height:25.50px;background:#fff;border:1px solid #dedede;border-bottom:none;border-radius:3px 3px 0 0;box-sizing:border-box"></div>
<div class="b" style="left:612.00px;top:140.50px;width:404.00px;height:1.00px;background:#dedede"></div>
<div class="t" style="left:551.00px;top:125.94px;font-size:8.7px;color:#333;font-weight:400;"><b style='font-family:Liberation Serif;font-size:9.5px'>i</b></div>
<div class="t" style="left:557.60px;top:125.94px;font-size:8.7px;color:#3c3c3c;font-weight:400;">Information</div>
<div class="t" style="left:548.10px;top:153.64px;font-size:8.7px;color:#4f4f4f;font-weight:700;">Lastname</div>
<div class="t" style="left:548.10px;top:187.24px;font-size:8.7px;color:#4f4f4f;font-weight:700;">Firstname</div>
<div class="t" style="left:548.10px;top:220.84px;font-size:8.7px;color:#4f4f4f;font-weight:700;">Email</div>
<div class="t" style="left:548.10px;top:254.44px;font-size:8.7px;color:#4f4f4f;font-weight:700;">Country</div>
<div class="t" style="left:548.10px;top:288.04px;font-size:8.7px;color:#4f4f4f;font-weight:700;">Department</div>
<div class="t" style="left:548.10px;top:321.64px;font-size:8.7px;color:#4f4f4f;font-weight:700;">« Collaborator » rights</div>
<div class="t" style="left:548.10px;top:355.24px;font-size:8.7px;color:#4f4f4f;font-weight:700;">« Pilot » rights</div>
<div class="t" style="left:548.10px;top:388.84px;font-size:8.7px;color:#4f4f4f;font-weight:700;">« Executive » rights</div>
<div class="t" style="left:548.10px;top:422.44px;font-size:8.7px;color:#4f4f4f;font-weight:700;">License expiry date</div>
<div class="t" style="left:548.10px;top:456.04px;font-size:8.7px;color:#4f4f4f;font-weight:700;">« Administrator » rights</div>
<div class="t" style="left:548.10px;top:489.64px;font-size:8.7px;color:#4f4f4f;font-weight:700;">Redirect page after login</div>
<div class="t" style="left:693.20px;top:153.64px;font-size:8.7px;color:#4a7aad;font-weight:700;">ALVAREZ</div>
<div class="t" style="left:693.20px;top:187.24px;font-size:8.7px;color:#4a7aad;font-weight:700;">Gloria</div>
<div class="t" style="left:693.20px;top:220.84px;font-size:8.7px;color:#4a7aad;font-weight:700;">gloriaalvarez</div>
<div class="t" style="left:693.50px;top:288.04px;font-size:8.7px;color:#4a7aad;font-weight:700;">None</div>
<div class="b" style="left:536.50px;top:308.30px;width:483.50px;height:1.00px;background:#f3f3f3"></div>
<div class="b" style="left:693.10px;top:249.30px;width:101.90px;height:17.60px;border:1px solid #a9a9a9;border-radius:2.5px;box-sizing:border-box;background:#fff"></div>
<div class="t" style="left:695.20px;top:254.28px;font-size:8.65px;color:#2a2a2a;font-weight:400;">Spain</div>
<svg class="b" style="left:780.50px;top:254.80px" width="11" height="7" viewBox="0 0 11 7"><path d="M0.8 1 L5.4 5.6 L10 1" fill="none" stroke="#555" stroke-width="1"/></svg>
<div class="b" style="left:693.20px;top:320.50px;width:9.80px;height:9.80px;background:#d3d3d3;border-radius:2px"></div>
<svg class="b" style="left:693.20px;top:320.50px" width="10" height="10" viewBox="0 0 10 10"><path d="M2.2 5.2 L4.2 7.2 L7.8 2.9" fill="none" stroke="#fff" stroke-width="1.4"/></svg>
<div class="b" style="left:693.20px;top:354.20px;width:9.80px;height:9.80px;background:#2a7ee8;border-radius:2px"></div>
<svg class="b" style="left:693.20px;top:354.20px" width="10" height="10" viewBox="0 0 10 10"><path d="M2.2 5.2 L4.2 7.2 L7.8 2.9" fill="none" stroke="#fff" stroke-width="1.4"/></svg>
<div class="b" style="left:693.20px;top:387.60px;width:9.80px;height:9.80px;background:#2a7ee8;border-radius:2px"></div>
<svg class="b" style="left:693.20px;top:387.60px" width="10" height="10" viewBox="0 0 10 10"><path d="M2.2 5.2 L4.2 7.2 L7.8 2.9" fill="none" stroke="#fff" stroke-width="1.4"/></svg>
<div class="b" style="left:693.20px;top:415.00px;width:101.60px;height:21.00px;background:#e9ecef;border-radius:3px"></div>
<div class="t" style="left:701.00px;top:422.48px;font-size:8.65px;color:#2a2a2a;font-weight:400;">10/03/2024</div>
<div class="b" style="left:693.20px;top:454.60px;width:9.80px;height:9.80px;background:#2a7ee8;border-radius:2px"></div>
<svg class="b" style="left:693.20px;top:454.60px" width="10" height="10" viewBox="0 0 10 10"><path d="M2.2 5.2 L4.2 7.2 L7.8 2.9" fill="none" stroke="#fff" stroke-width="1.4"/></svg>
<div class="b" style="left:693.10px;top:484.40px;width:101.90px;height:17.20px;border:1px solid #5a5a5a;border-radius:2.5px;box-sizing:border-box;background:#fff"></div>
<div class="t" style="left:695.20px;top:488.98px;font-size:8.65px;color:#2a2a2a;font-weight:400;">None</div>
<svg class="b" style="left:780.50px;top:489.70px" width="11" height="7" viewBox="0 0 11 7"><path d="M0.8 1 L5.4 5.6 L10 1" fill="none" stroke="#555" stroke-width="1"/></svg>
<div class="b" style="left:0.40px;top:180.30px;width:51.60px;height:44.70px;border:3.3px solid #bd271d;border-radius:7px;box-sizing:border-box"></div>
<div class="b" style="left:0.00px;top:184.00px;width:1.00px;height:37.00px;background:#bd271d"></div>
<div class="b" style="left:39.40px;top:183.20px;width:46.00px;height:46.00px;border-radius:50%;background:#bd271d;box-shadow:0 0 0 2.2px #fff"></div>
<svg class="b" style="left:57.30px;top:197.30px" width="12.5" height="19.5" viewBox="0 0 12.5 19.5"><path d="M8.7 0 V16.3 H11.9 V19.3 H0.6 V16.3 H3.8 V5.2 C2.8 5.5 1.4 5.1 0.2 4.4 V1.9 C1.8 1.7 3.4 1.0 4.6 0 Z" fill="#fff"/></svg>
<div class="b" style="left:202.40px;top:163.80px;width:97.60px;height:43.20px;border:3px solid #bd271d;border-radius:7px;box-sizing:border-box"></div>
<div class="b" style="left:286.00px;top:163.00px;width:46.00px;height:46.00px;border-radius:50%;background:#bd271d;box-shadow:0 0 0 2.2px #fff"></div>
<div class="t" style="left:289.00px;width:40px;text-align:center;top:172.30px;font-size:28px;color:#fff;font-weight:700;">2</div>
<div class="b" style="left:540.30px;top:106.20px;width:73.70px;height:44.10px;border:3px solid #bd271d;border-radius:7px;box-sizing:border-box"></div>
<div class="b" style="left:607.80px;top:106.70px;width:46.20px;height:46.20px;border-radius:50%;background:#bd271d;box-shadow:0 0 0 2.2px #fff"></div>
<div class="t" style="left:610.90px;width:40px;text-align:center;top:116.10px;font-size:28px;color:#fff;font-weight:700;">3</div>
<div class="b" style="left:539.80px;top:472.50px;width:263.40px;height:43.80px;border:3px solid #bd271d;border-radius:7px;box-sizing:border-box"></div>
<div class="b" style="left:800.20px;top:469.10px;width:45.80px;height:45.80px;border-radius:50%;background:#bd271d;box-shadow:0 0 0 2.2px #fff"></div>
<div class="t" style="left:803.10px;width:40px;text-align:center;top:478.30px;font-size:28px;color:#fff;font-weight:700;">4</div>
</body></html>
